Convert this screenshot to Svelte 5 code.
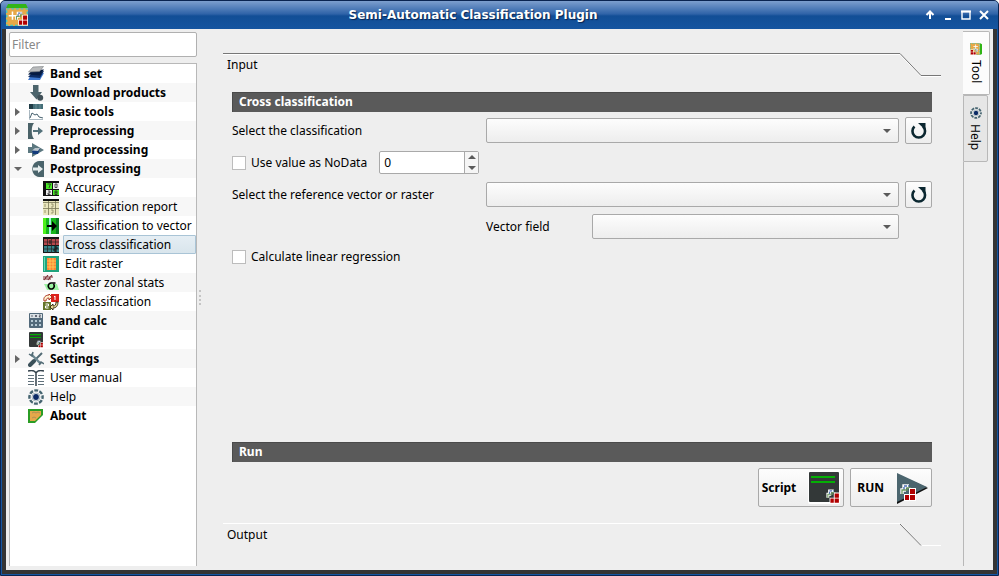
<script>
  const tree = [
    { label: 'Band set', icon: 'bandset', bold: true },
    { label: 'Download products', icon: 'download', bold: true },
    { label: 'Basic tools', icon: 'basic', bold: true, branch: true },
    { label: 'Preprocessing', icon: 'pre', bold: true, branch: true },
    { label: 'Band processing', icon: 'bandproc', bold: true, branch: true },
    { label: 'Postprocessing', icon: 'post', bold: true, branch: true, open: true },
    { label: 'Accuracy', icon: 'accuracy', child: true },
    { label: 'Classification report', icon: 'report', child: true },
    { label: 'Classification to vector', icon: 'vector', child: true },
    { label: 'Cross classification', icon: 'cross', child: true },
    { label: 'Edit raster', icon: 'edit', child: true },
    { label: 'Raster zonal stats', icon: 'zonal', child: true },
    { label: 'Reclassification', icon: 'reclass', child: true },
    { label: 'Band calc', icon: 'calc', bold: true },
    { label: 'Script', icon: 'script', bold: true },
    { label: 'Settings', icon: 'settings', bold: true, branch: true },
    { label: 'User manual', icon: 'manual' },
    { label: 'Help', icon: 'help' },
    { label: 'About', icon: 'about', bold: true }
  ];

  let selected = $state('Cross classification');
  let nodata = $state(0);
</script>

{#snippet squares()}
  <path d="M3 5V1h5M1 9V5h4" fill="none" stroke="#fff" stroke-width="3.4" />
  <path d="M3 5V1h5" fill="none" stroke="#4a6eb4" stroke-width="1.4" stroke-dasharray="3 1" />
  <path d="M1 9V5h4M6 6V3h4" fill="none" stroke="#6d9a60" stroke-width="1.3" />
  <path d="M8 3h7v13H3V9h5z" fill="#fff" />
  <path d="M9 4h5v5H9zM9 10h5v5H9zM4 10h4v5H4z" fill="#b10000" />
{/snippet}

{#snippet icon(name)}
  <svg class="icon" viewBox="0 0 16 16" aria-hidden="true">
    {#if name === 'app'}
      <path d="M1.500 0h13L16 3H0z" fill="#31b516" />
      <path d="M0 3h16v13H0z" fill="#e7a848" />
      <path d="M.5 3.500h15v12H.5z" fill="none" stroke="#45c8c0" stroke-dasharray="2 1.400" />
      <path d="M4.700 5.500v6M2 8.500h5.400" stroke="#fff" stroke-width="1.100" />
      <g transform="translate(7 6) scale(.6)">{@render squares()}</g>
    {:else if name === 'bandset'}
      <path d="M0 14l3-5 13-2-4 7z" fill="#3e78d0" />
      <path d="M0 11l4-4 12-2-4 7z" fill="#0d2c63" />
      <path d="M0 8.500l4-4 12-1-4 6z" fill="#061b42" />
      <path d="M.5 6L5 1l10.500-.5-4 5z" fill="#b9bbbc" stroke="#767a7d" stroke-width=".6" />
    {:else if name === 'download'}
      <path d="M5 0h5.500v7H14l-5.500 7.500L2 7h3z" fill="#4c646c" />
      <circle cx="12.200" cy="12.700" r="3" fill="#405058" />
    {:else if name === 'basic'}
      <path d="M1 0h14v5H1z" fill="#456f78" />
      <path d="M1 0h4v5H1z" fill="#203c46" />
      <path d="M8 0v5M12 0v5" stroke="#7fa0a7" stroke-width=".6" />
      <path d="M1.500 6v9.500H15" fill="none" stroke="#a9b7c0" />
      <path d="M2 14l2-5 3 2 2-1 2 3 4 1" fill="none" stroke="#45606d" />
    {:else if name === 'pre'}
      <path d="M0 0h6C3 3 3 13 6 16H0z" fill="#4a6268" />
      <path d="M5 8h6" stroke="#53717a" stroke-width="2" />
      <path d="M10 4l5 4-5 4z" fill="#53717a" />
    {:else if name === 'bandproc'}
      <path d="M0 5h4V1l12 7-12 7v-4H0z" fill="#5c7880" />
      <path d="M4 9l3-2.500h5L10 12H5z" fill="#143c7c" />
      <path d="M4 8.500L7 6h5l-2 3z" fill="#bcc6cc" />
    {:else if name === 'post'}
      <path d="M16 0v16h-5C2 15 2 1 11 0z" fill="#4a646b" />
      <path d="M5 6.500h5V4l5 4-5 4V9.500H5z" fill="#e6edee" />
    {:else if name === 'accuracy'}
      <path d="M0 1h16v15H0z" fill="#111" />
      <path d="M3 3h6v6H3zM10 10h6v5h-6z" fill="#4bea28" />
      <path d="M10 3h6v6h-6zM3 10h6v5H3z" fill="#eee" />
      <path d="M4.500 4h3L6 8M12 4h2v3.500h-2zM5 11h2v2H5v1.500h2.500M12 11h2v3.500h-2zM12 12.700h2" fill="none" stroke="#222" stroke-width=".8" />
    {:else if name === 'report'}
      <path d="M0 0h16v16H0z" fill="#e9e6bd" />
      <path d="M0 0h16v2H0z" fill="#111" />
      <path d="M0 3.500h16M0 9.500h16M5.500 2v14M12.500 2v14" stroke="#777655" stroke-width=".8" />
      <path d="M2 5v3M8 5h2v3H8M2 11v3M8 11h2v3H8" fill="none" stroke="#888660" stroke-width=".8" />
    {:else if name === 'vector'}
      <path d="M0 0h16v16H0z" fill="#18b71c" />
      <path d="M0 0h3v16H0z" fill="#50f01c" />
      <path d="M6 0h2v16H6z" fill="#a5efe0" />
      <path d="M13 0h3v16h-3z" fill="#087b20" />
      <path d="M4 7h5V3l5 5-5 5V9H4z" fill="#000" />
    {:else if name === 'cross'}
      <path d="M0 0h16v16H0z" fill="#171717" />
      <path d="M1 2h15v6H1z" fill="#b8484c" />
      <path d="M1 9h15v6H1z" fill="#35858a" />
      <path d="M4.500 1v15M8.500 1v15M12.500 1v15M0 5h16M0 12h16" stroke="#222" stroke-width=".7" />
      <path d="M7 3v4M11 10h3v2h-3v2h3" fill="none" stroke="#111" />
    {:else if name === 'edit'}
      <path d="M0 0h16v16H0z" fill="#21a37d" />
      <path d="M1 1h1v14H1z" fill="#62deb7" />
      <path d="M4 2h9v12H4z" fill="#ff8635" />
      <path d="M4 5h9M4 8h9M4 11h9M7 2v12M10 2v12" stroke="#ffd45b" stroke-width=".8" />
    {:else if name === 'zonal'}
      <path d="M1 9h13l2 6H4z" fill="#9cf3a2" />
      <path d="M1 5l4-5M5 5l4-5M0 2h10M0 4h8" stroke="#7d2e34" stroke-width="1.100" />
      <path d="M12.500 8H8.500A3 3 0 1 0 10.500 9" fill="none" stroke="#000" stroke-width="1.700" />
    {:else if name === 'reclass'}
      <path d="M8 0h8v8H8z" fill="#dc211c" />
      <path d="M0 8h8v8H0z" fill="#66752a" />
      <path d="M11 3l1-1v4M2.500 10h3v2h-3v2h3" fill="none" stroke="#fff" />
      <path d="M1 7C0 3 3 1 6 1V0l3 3-3 3V4C4 4 3 5 3 7z" fill="#fff3cf" stroke="#a52716" stroke-width=".9" />
      <path d="M15 8c0 4-2 6-5 6v2l-3-3 3-3v2c2 0 3-1 3-4z" fill="#e6d896" stroke="#332611" stroke-width=".9" />
    {:else if name === 'calc'}
      <rect x="1" y="0" width="14" height="15" rx="1" fill="#52697a" />
      <path d="M2 1h12v4H2z" fill="#d9e0e4" />
      <path d="M4 2v2M7 2l2 2M9 2L7 4M11 2h1.500L11 4h2" fill="none" stroke="#334" stroke-width=".7" />
      <path d="M3 7h2v2H3zM7 7h2v2H7zM11 7h2v2h-2zM3 11h2v2H3zM7 11h2v2H7zM11 11h2v2h-2z" fill="#b6c9d4" />
    {:else if name === 'script'}
      <rect x="1" y="0" width="14" height="15" rx="1" fill="#333838" />
      <path d="M2 2.700h11M2 5.500h11" stroke="#04ac04" stroke-width="1.200" />
      <g transform="translate(9 9) scale(.42)">{@render squares()}</g>
    {:else if name === 'settings'}
      <path d="M14 2L2 14" stroke="#526b75" stroke-width="2" />
      <path d="M2 14l4-4" stroke="#3a5059" stroke-width="4" stroke-linecap="round" />
      <path d="M3 3l10 10" stroke="#6c8791" stroke-width="2.400" />
      <path d="M1 3l3 2 1-4M11 14l2-3 3 2" fill="none" stroke="#526b75" stroke-width="1.500" />
    {:else if name === 'manual'}
      <path d="M0 1c4-1 7 0 8 2 1-2 4-3 8-2M8 3v13" fill="none" stroke="#34424c" stroke-width="1.500" />
      <path d="M0 5.500h6M0 8.500h6M0 11.500h6M0 14.500h6M10 5.500h6M10 8.500h6M10 11.500h6M10 14.500h6" stroke="#60717b" />
    {:else if name === 'help'}
      <circle cx="8" cy="8" r="6.600" fill="none" stroke="#456470" stroke-width="2.400" stroke-dasharray="3.800 1.384" stroke-dashoffset="1.900" />
      <circle cx="8" cy="8" r="4" fill="none" stroke="#a9b9c1" />
      <circle cx="8" cy="8" r="2.900" fill="#0c2b66" />
    {:else if name === 'about'}
      <path d="M0 1h15v6l-8 8H0z" fill="#2b9d25" />
      <path d="M2 3h11v4l-6 6H2z" fill="#e4a84a" />
      <path d="M4 5l2-1 2 1 2-1 2 1M4 10l2-1 2 1" fill="none" stroke="#a08a56" stroke-width=".8" />
    {/if}
  </svg>
{/snippet}

{#snippet refresh()}
  <svg class="refresh" viewBox="0 0 18 18" aria-hidden="true">
    <path d="M4.500 4.500A6.300 6.300 0 1 0 13 4.500" fill="none" stroke="#0b2730" stroke-width="2.600" />
    <path d="M8 1h7.500v7z" fill="#0b2730" />
  </svg>
{/snippet}

{#snippet combo(id)}
  <span class="combo"><select {id}></select></span>
{/snippet}

<div class="window">
  <header>
    <span class="logo">{@render icon('app')}</span>
    <h1>Semi-Automatic Classification Plugin</h1>
    <div class="controls">
      <button aria-label="Shade"><svg viewBox="0 0 10 10"><path d="M5 1v8M1.500 5L5 1.500 8.500 5" /></svg></button>
      <button aria-label="Minimize"><svg viewBox="0 0 10 10"><path d="M2 9h6" /></svg></button>
      <button aria-label="Maximize"><svg viewBox="0 0 10 10"><path d="M1 1.500h8V9H1z" stroke-width="1.400" /><path d="M0 1.500h10" /></svg></button>
      <button aria-label="Close"><svg viewBox="0 0 10 10"><path d="M1 1l8 8M9 1L1 9" /></svg></button>
    </div>
  </header>

  <div class="body">
    <aside>
      <input class="filter" type="text" placeholder="Filter" aria-label="Filter" />
      <ul class="tree">
        {#each tree as item}
          <li>
            <button class="row" class:bold={item.bold} class:child={item.child} class:selected={selected === item.label} onclick={() => (selected = item.label)}>
              <span class="arrow" class:branch={item.branch} class:open={item.open}></span>
              {@render icon(item.icon)}
              <span class="label">{item.label}</span>
            </button>
          </li>
        {/each}
      </ul>
    </aside>

    <div class="splitter"></div>

    <main>
      <button class="fold">
        <span>Input</span>
        <svg viewBox="0 0 41 24" aria-hidden="true"><path d="M0 1.500L21 23.500H41" stroke="#fff" /><path d="M0 .5L21 22.500H41" stroke="#777" /></svg>
      </button>

      <section class="page">
        <h2>Cross classification</h2>
        <div class="line">
          <label class="name" for="classification">Select the classification</label>
          {@render combo('classification')}
          <button class="tool" aria-label="Refresh classifications">{@render refresh()}</button>
        </div>
        <div class="line">
          <label class="check"><input type="checkbox" />Use value as NoData</label>
          <div class="spin">
            <input type="number" aria-label="NoData value" bind:value={nodata} />
            <div class="steps">
              <button aria-label="Increase" onclick={() => (nodata += 1)}><i class="up"></i></button>
              <button aria-label="Decrease" onclick={() => (nodata -= 1)}><i class="down"></i></button>
            </div>
          </div>
        </div>
        <div class="line">
          <label class="name" for="reference">Select the reference vector or raster</label>
          {@render combo('reference')}
          <button class="tool" aria-label="Refresh references">{@render refresh()}</button>
        </div>
        <div class="line field">
          <label for="field">Vector field</label>
          {@render combo('field')}
        </div>
        <label class="check"><input type="checkbox" />Calculate linear regression</label>

        <h2 class="runhead">Run</h2>
        <div class="actions">
          <button class="action">
            Script
            <svg viewBox="0 0 32 32" aria-hidden="true">
              <rect x="0" y="0" width="32" height="32" rx="2" fill="#fff" />
              <rect x="1" y="0" width="30" height="30" rx="1" fill="#333838" />
              <path d="M3 5h24M3 10h24" stroke="#04b004" stroke-width="2" />
              <g transform="translate(19 18) scale(.85)">{@render squares()}</g>
            </svg>
          </button>
          <button class="action">
            RUN
            <svg viewBox="0 0 32 32" aria-hidden="true">
              <path d="M1 2v30l31-16z" fill="#111" />
              <path d="M1 1v29l30-15z" fill="#4b656e" />
              <g transform="translate(5 13)">{@render squares()}</g>
            </svg>
          </button>
        </div>
      </section>

      <button class="fold lower">
        <span>Output</span>
        <svg viewBox="0 0 41 24" aria-hidden="true"><path d="M0 .5L21 22.500H41" stroke="#fff" /><path d="M0 1L21 22.500" stroke="#777" /></svg>
      </button>
    </main>

    <nav>
      <button class="tab active">{@render icon('app')}<span>Tool</span></button>
      <button class="tab">{@render icon('help')}<span>Help</span></button>
      <div class="rail"></div>
    </nav>
  </div>
</div>

<style>
  :global(body) { margin: 0; }
  * { box-sizing: border-box; }
  .window {
    min-height: 100vh;
    display: flex;
    flex-direction: column;
    background: #343434;
    border: 1px solid #0a2450;
    border-radius: 5px 5px 0 0;
    box-shadow: inset 0 0 0 1px #1555a0;
    font: 12px/19px "Noto Sans", sans-serif;
    color: #000;
  }
  button, input, select { font: inherit; color: inherit; margin: 0; padding: 0; }
  button { border: 0; background: none; }
  .icon { width: 16px; height: 16px; flex: none; display: block; }

  header {
    height: 28px;
    display: flex;
    align-items: center;
    padding: 0 9px 0 5px;
    border-radius: 4px 4px 0 0;
    background: linear-gradient(#7d9fce 0, #2f63a8 13px, #124e96 15px, #1555a0 100%);
  }
  .logo .icon { width: 22px; height: 22px; }
  h1 {
    flex: 1;
    margin: 0;
    padding-right: 7px;
    text-align: center;
    color: #fff;
    font: bold 12px/18px "DejaVu Sans", sans-serif;
    text-shadow: 1px 1px 1px #0a2450;
  }
  .controls { display: flex; gap: 8px; }
  .controls button { width: 10px; height: 10px; }
  .controls svg { display: block; width: 10px; height: 10px; fill: none; stroke: #fff; stroke-width: 2; }

  .body {
    flex: 1;
    display: flex;
    margin: 0 5px 5px;
    padding: 0 3px 4px;
    background: #eee;
  }
  aside { width: 188px; flex: none; display: flex; flex-direction: column; gap: 6px; padding-top: 3px; }
  .filter {
    width: 100%;
    height: 25px;
    padding: 0 2px;
    border: 1px solid #b0b0b0;
    border-radius: 2px;
    background: #fff;
    outline: 0;
  }
  .filter::placeholder { color: #888; opacity: 1; }
  .tree {
    flex: 1;
    margin: 0;
    padding: 0;
    list-style: none;
    background: #fff;
    border: 1px solid #b8b8b8;
    border-bottom: 0;
  }
  .tree li:nth-child(even) { background: #f7f7f7; }
  .row { display: flex; align-items: center; width: 100%; height: 19px; text-align: left; white-space: nowrap; }
  .row.bold { font-weight: bold; }
  .row .icon { margin-right: 5px; }
  .arrow { width: 18px; flex: none; padding-left: 5px; }
  .child .arrow { width: 33px; }
  .arrow.branch::before { content: ""; display: block; width: 0; height: 0; border: 4px solid transparent; border-left: 5px solid #666; border-right: 0; }
  .arrow.open { padding-left: 4px; }
  .arrow.open::before { border: 4px solid transparent; border-top: 4px solid #666; border-bottom: 0; }
  .label { flex: 1; height: 19px; padding-left: 1px; }
  .child .icon { margin-right: 4px; }
  .child .label { padding-left: 1px; border: 1px solid transparent; line-height: 17px; }
  .selected .label { background: linear-gradient(#e5eef4, #d9e5ec); border-color: #a9c4d6; border-radius: 1px; }

  .splitter { width: 26px; flex: none; display: flex; align-items: center; padding-left: 2px; }
  .splitter::before { content: ""; height: 15px; border-left: 2px dotted #c4c4c4; }

  main { flex: 1; min-width: 0; display: flex; flex-direction: column; padding-top: 24px; }
  .fold { display: flex; height: 24px; text-align: left; }
  .fold span { flex: 1; height: 24px; padding-left: 4px; line-height: 22px; border-top: 1px solid #777; box-shadow: inset 0 1px #fff; }
  .fold.lower span { border-color: #fff; box-shadow: none; }
  .fold svg { width: 41px; height: 24px; fill: none; flex: none; }
  .lower { margin-bottom: 19px; }
  .page { flex: 1; display: flex; flex-direction: column; gap: 5px; padding: 15px 9px 16px; }
  h2 {
    margin: 0;
    height: 20px;
    padding-left: 6px;
    color: #fff;
    background: #5a5a5a;
    border: 1px solid #4a4a4a;
    border-width: 1px 0 0 1px;
    font-size: 12px;
    line-height: 18px;
  }
  .line { display: flex; align-items: center; height: 27px; }
  .name { width: 254px; flex: none; }
  .combo { position: relative; flex: 1; min-width: 0; display: flex; }
  .combo select {
    appearance: none;
    width: 100%;
    height: 25px;
    border: 1px solid #a9a9a9;
    border-radius: 2px;
    background: linear-gradient(#fdfdfd, #ededed);
  }
  .combo::after { content: ""; position: absolute; right: 8px; top: 11px; border: 4px solid transparent; border-top-color: #5a5a5a; border-bottom: 0; pointer-events: none; }
  .tool {
    width: 27px;
    height: 27px;
    flex: none;
    margin-left: 6px;
    display: grid;
    place-items: center;
    border: 1px solid #a9a9a9;
    border-radius: 2px;
    background: linear-gradient(#fdfdfd, #ededed);
  }
  .refresh { width: 18px; height: 18px; }
  .check { display: flex; align-items: center; gap: 5px; height: 23px; }
  .check input { appearance: none; width: 14px; height: 14px; border: 1px solid #bcbcbc; background: #fff; }
  .check input:checked { background: #5a5a5a; box-shadow: inset 0 0 0 3px #fff; }
  .spin { display: flex; width: 100px; height: 23px; margin-left: 12px; border: 1px solid #a9a9a9; border-radius: 2px; background: #fff; }
  .spin input { flex: 1; min-width: 0; border: 0; padding-left: 4px; background: none; outline: 0; appearance: textfield; }
  .spin input::-webkit-inner-spin-button { appearance: none; }
  .steps { width: 14px; display: flex; flex-direction: column; border-left: 1px solid #a9a9a9; background: #f5f5f5; }
  .steps button { flex: 1; display: grid; place-items: center; }
  .up, .down { border: 4px solid transparent; }
  .up { border-top: 0; border-bottom-color: #5a5a5a; }
  .down { border-bottom: 0; border-top-color: #5a5a5a; }
  .field { padding: 0 33px 0 254px; }
  .field label { width: 106px; flex: none; }
  .runhead { margin-top: auto; }
  .actions { display: flex; justify-content: flex-end; gap: 6px; padding-top: 1px; }
  .action {
    display: flex;
    align-items: center;
    gap: 12px;
    height: 39px;
    padding: 0 3px;
    border: 1px solid #a9a9a9;
    border-radius: 2px;
    background: linear-gradient(#fdfdfd, #ededed);
    font-weight: bold;
  }
  .action + .action { padding-left: 6px; }
  .action svg { width: 32px; height: 32px; }

  nav { display: flex; flex-direction: column; width: 49px; flex: none; padding: 2px 0 0 22px; }
  .tab {
    writing-mode: vertical-rl;
    display: flex;
    align-items: center;
    gap: 5px;
    width: 25px;
    height: 67px;
    padding-top: 11px;
    border: 1px solid #b8b8b8;
    border-radius: 0 2px 2px 0;
    background: #e6e6e6;
  }
  .tab.active { width: 27px; height: 64px; border-left: 0; background: #fcfcfc; }
  .tab .icon { width: 12px; height: 12px; }
  .tab.active .icon { transform: rotate(90deg); }
  .rail { flex: 1; border-left: 1px solid #b8b8b8; }
</style>
